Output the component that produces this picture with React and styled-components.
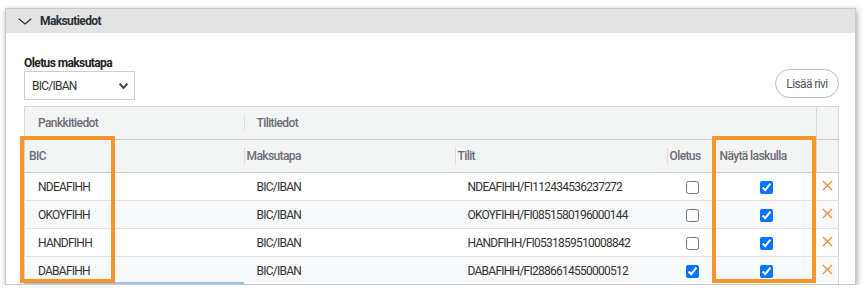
import React from 'react';
import styled, { createGlobalStyle } from 'styled-components';

const GlobalStyle = createGlobalStyle`
  body {
    margin: 0;
    background: #fff;
    font-family: Roboto, "Liberation Sans", sans-serif;
    color: #333;
  }
`;

const Page = styled.div`
  padding: 8px 0 0 5px;
`;

const Panel = styled.section`
  width: 851px;
  height: 277px;
  box-sizing: border-box;
  border: 1px solid #c9c9c9;
  box-shadow: 1px 2px 6px rgba(0, 0, 0, 0.35);
  background: #fff;
  overflow: hidden;
`;

const PanelHeader = styled.div`
  height: 24px;
  display: flex;
  align-items: center;
  gap: 8px;
  padding-left: 12px;
  background: #e3e3e3;
  font-size: 12px;
  font-weight: 700;
  letter-spacing: -0.6px;
  color: #2a2e38;
`;

const PanelBody = styled.div`
  padding: 22px 16px 0 18px;
`;

const TopRow = styled.div`
  display: flex;
  justify-content: space-between;
  align-items: flex-end;
`;

const Field = styled.div`
  display: flex;
  flex-direction: column;
`;

const Label = styled.label`
  font-size: 12px;
  font-weight: 700;
  line-height: 16px;
  letter-spacing: -0.6px;
  color: #222;
`;

const Select = styled.div`
  width: 111px;
  height: 29px;
  box-sizing: border-box;
  border: 1px solid #cfcfcf;
  display: flex;
  align-items: center;
  justify-content: space-between;
  padding: 0 6px 0 7px;
  font-size: 12px;
  letter-spacing: -0.75px;
  color: #333;
`;

const AddButton = styled.button`
  width: 64px;
  height: 29px;
  margin-bottom: 2px;
  border: 1px solid #bdbdbd;
  border-radius: 15px;
  background: #fff;
  font-family: Roboto, "Liberation Sans", sans-serif;
  font-size: 12px;
  letter-spacing: -0.6px;
  color: #555;
  padding: 0;
`;

const TableWrap = styled.div`
  position: relative;
  margin-top: 6px;
`;

const Table = styled.table`
  width: 814px;
  border-collapse: collapse;
  table-layout: fixed;
  border: 1px solid #d6d6d6;
  font-size: 12px;
`;

const HeadRow = styled.tr`
  background: #f3f4f4;
  border-bottom: 1px solid #cbcbcb;
`;

const Th = styled.th`
  height: 32px;
  padding: 0 0 0 ${(p) => p.$pad || 0}px;
  text-align: left;
  font-weight: 500;
  letter-spacing: -0.6px;
  color: #6d6a75;
  border-left: ${(p) => (p.$edge ? '1px solid #d6d6d6' : 'none')};
`;

const HeadLabel = styled.span`
  display: inline-block;
  line-height: 16px;
  padding-left: ${(p) => (p.$sep ? p.$gap || 2 : 0)}px;
  border-left: ${(p) => (p.$sep ? '1px solid #dcdcdc' : 'none')};
`;

const Row = styled.tr`
  background: ${(p) => (p.$alt ? '#f8f9fb' : '#fff')};
  border-bottom: 1px solid #e2e2e2;
`;

const Td = styled.td`
  height: 27px;
  padding: 0 0 0 ${(p) => (p.$center ? 0 : 13)}px;
  text-align: ${(p) => (p.$center ? 'center' : 'left')};
  letter-spacing: -0.75px;
  color: #333;
  white-space: nowrap;
  box-shadow: ${(p) => (p.$focus ? 'inset 0 -2px 0 #9fc3e8' : 'none')};
`;

const Check = styled.input`
  width: 13px;
  height: 13px;
  margin: 0;
  vertical-align: middle;
  position: relative;
  left: ${(p) => p.$shift || 0}px;
`;

const Highlight = styled.div`
  position: absolute;
  top: 30px;
  left: ${(p) => p.$left}px;
  width: ${(p) => p.$width}px;
  height: 147px;
  box-sizing: border-box;
  border: 4px solid #f7952d;
  pointer-events: none;
`;

const Chevron = ({ w = 10, h = 6, stroke = '#333', sw = 1.3 }) => (
  <svg width={w} height={h} viewBox={`0 0 ${w} ${h}`}>
    <path
      d={`M0.7 0.7 L${w / 2} ${h - 1} L${w - 0.7} 0.7`}
      fill="none"
      stroke={stroke}
      strokeWidth={sw}
    />
  </svg>
);

const RemoveIcon = () => (
  <svg width="11" height="11" viewBox="0 0 11 11">
    <path d="M1 1 L10 10 M10 1 L1 10" stroke="#f2913d" strokeWidth="1.4" fill="none" />
  </svg>
);

const rows = [
  { bic: 'NDEAFIHH', account: 'NDEAFIHH/FI112434536237272', def: false },
  { bic: 'OKOYFIHH', account: 'OKOYFIHH/FI0851580196000144', def: false },
  { bic: 'HANDFIHH', account: 'HANDFIHH/FI0531859510008842', def: false },
  { bic: 'DABAFIHH', account: 'DABAFIHH/FI2886614550000512', def: true },
];

export default function App() {
  return (
    <Page>
      <GlobalStyle />
      <Panel>
        <PanelHeader>
          <Chevron w={14} h={7} stroke="#2a2e38" sw={1.2} />
          Maksutiedot
        </PanelHeader>
        <PanelBody>
          <TopRow>
            <Field>
              <Label>Oletus maksutapa</Label>
              <Select>
                BIC/IBAN
                <Chevron w={9} h={6} stroke="#444" sw={2} />
              </Select>
            </Field>
            <AddButton>Lisää rivi</AddButton>
          </TopRow>
          <TableWrap>
            <Table>
              <colgroup>
                <col style={{ width: 219 }} />
                <col style={{ width: 211 }} />
                <col style={{ width: 212 }} />
                <col style={{ width: 46 }} />
                <col style={{ width: 104 }} />
                <col style={{ width: 22 }} />
              </colgroup>
              <thead>
                <HeadRow>
                  <Th $pad={13}>Pankkitiedot</Th>
                  <Th colSpan={4}>
                    <HeadLabel $sep $gap={12}>Tilitiedot</HeadLabel>
                  </Th>
                  <Th $edge />
                </HeadRow>
                <HeadRow>
                  <Th $pad={4}>BIC</Th>
                  <Th>
                    <HeadLabel $sep>Maksutapa</HeadLabel>
                  </Th>
                  <Th>
                    <HeadLabel $sep>Tilit</HeadLabel>
                  </Th>
                  <Th>
                    <HeadLabel $sep>Oletus</HeadLabel>
                  </Th>
                  <Th>
                    <HeadLabel $sep $gap={6}>Näytä laskulla</HeadLabel>
                  </Th>
                  <Th $edge />
                </HeadRow>
              </thead>
              <tbody>
                {rows.map((r, i) => (
                  <Row key={r.bic} $alt={i % 2 === 1}>
                    <Td $focus={i === rows.length - 1}>{r.bic}</Td>
                    <Td>BIC/IBAN</Td>
                    <Td>{r.account}</Td>
                    <Td $center>
                      <Check type="checkbox" defaultChecked={r.def} $shift={3} />
                    </Td>
                    <Td $center>
                      <Check type="checkbox" defaultChecked $shift={2} />
                    </Td>
                    <Td $center>
                      <RemoveIcon />
                    </Td>
                  </Row>
                ))}
              </tbody>
            </Table>
            <Highlight $left={-4} $width={95} />
            <Highlight $left={688} $width={104} />
          </TableWrap>
        </PanelBody>
      </Panel>
    </Page>
  );
}
